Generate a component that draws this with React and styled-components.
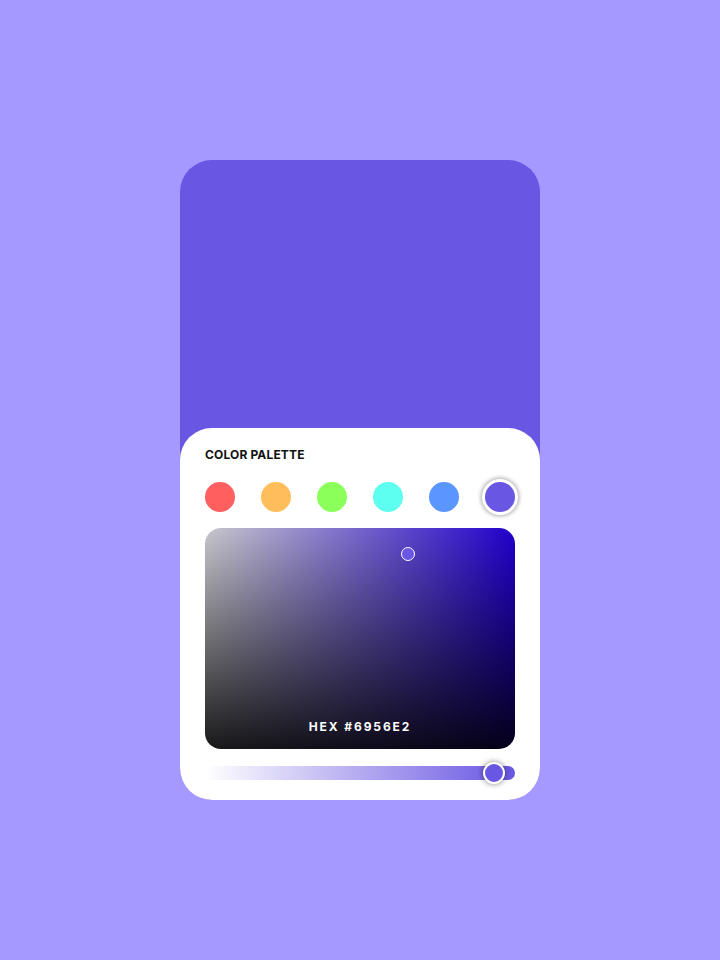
import React, { useState } from "react";
import styled, { createGlobalStyle } from "styled-components";

const GlobalStyle = createGlobalStyle`
  html, body {
    margin: 0;
    padding: 0;
    background: #a598ff;
    font-family: Inter, "Liberation Sans", sans-serif;
  }
`;

const Page = styled.div`
  width: 720px;
  height: 960px;
  display: flex;
  align-items: center;
  justify-content: center;
`;

const Card = styled.div`
  width: 360px;
  height: 640px;
  border-radius: 32px;
  overflow: hidden;
  background: ${(p) => p.color};
  display: flex;
  flex-direction: column;
  justify-content: flex-end;
`;

const Panel = styled.div`
  background: #ffffff;
  border-radius: 32px 32px 0 0;
  padding: 20px 25px 20px;
  display: flex;
  flex-direction: column;
`;

const Title = styled.h3`
  margin: 0;
  font-size: 12px;
  font-weight: 700;
  letter-spacing: 0.15px;
  color: #111;
  line-height: 14px;
`;

const Swatches = styled.div`
  display: flex;
  justify-content: space-between;
  align-items: center;
  margin-top: 17px;
  height: 36px;
`;

const Swatch = styled.button`
  width: 30px;
  height: 30px;
  border-radius: 50%;
  padding: 0;
  border: none;
  cursor: pointer;
  background: ${(p) => p.$color};
  box-shadow: ${(p) =>
    p.$active ? "0 0 0 3px #fff, 0 0 4px 4px rgba(0,0,0,0.35)" : "none"};
`;

const Field = styled.div`
  position: relative;
  margin-top: 13px;
  height: 221px;
  border-radius: 16px;
  overflow: hidden;
  background:
    linear-gradient(to bottom, rgba(0, 0, 0, 0.2), rgba(0, 0, 0, 0.9)),
    linear-gradient(to right, rgba(255, 255, 255, 0.98), rgba(255, 255, 255, 0)),
    #2a00ff;
  display: flex;
  align-items: flex-end;
  justify-content: center;
`;

const Picker = styled.div`
  position: absolute;
  width: 12px;
  height: 12px;
  border: 1.5px solid #fff;
  border-radius: 50%;
  background: ${(p) => p.$color};
  transform: translate(-50%, -50%);
`;

const HexLabel = styled.span`
  color: #fff;
  font-size: 12px;
  font-weight: 700;
  letter-spacing: 1.9px;
  margin-bottom: 15px;
  line-height: 14px;
`;

const Slider = styled.div`
  position: relative;
  margin-top: 17px;
  height: 14px;
  border-radius: 7px;
  background: linear-gradient(to right, rgba(105, 86, 226, 0), ${(p) => p.$color});
`;

const Thumb = styled.div`
  position: absolute;
  top: 50%;
  width: 18px;
  height: 18px;
  border: 2px solid #fff;
  border-radius: 50%;
  background: ${(p) => p.$color};
  box-shadow: 0 0 5px 1px rgba(0, 0, 0, 0.35);
  transform: translate(-50%, -50%);
`;

const colors = ["#ff5f5f", "#ffbd5c", "#8bff5a", "#5cfff0", "#5b95ff", "#6956e2"];

export default function App() {
  const [active, setActive] = useState(5);
  const current = colors[active];

  return (
    <Page>
      <GlobalStyle />
      <Card color="#6956e2">
        <Panel>
          <Title>COLOR PALETTE</Title>
          <Swatches>
            {colors.map((c, i) => (
              <Swatch key={c} $color={c} $active={i === active} onClick={() => setActive(i)} />
            ))}
          </Swatches>
          <Field>
            <Picker $color={current} style={{ left: "65.5%", top: "11.8%" }} />
            <HexLabel>HEX #6956E2</HexLabel>
          </Field>
          <Slider $color={current}>
            <Thumb $color={current} style={{ left: "93.3%" }} />
          </Slider>
        </Panel>
      </Card>
    </Page>
  );
}
